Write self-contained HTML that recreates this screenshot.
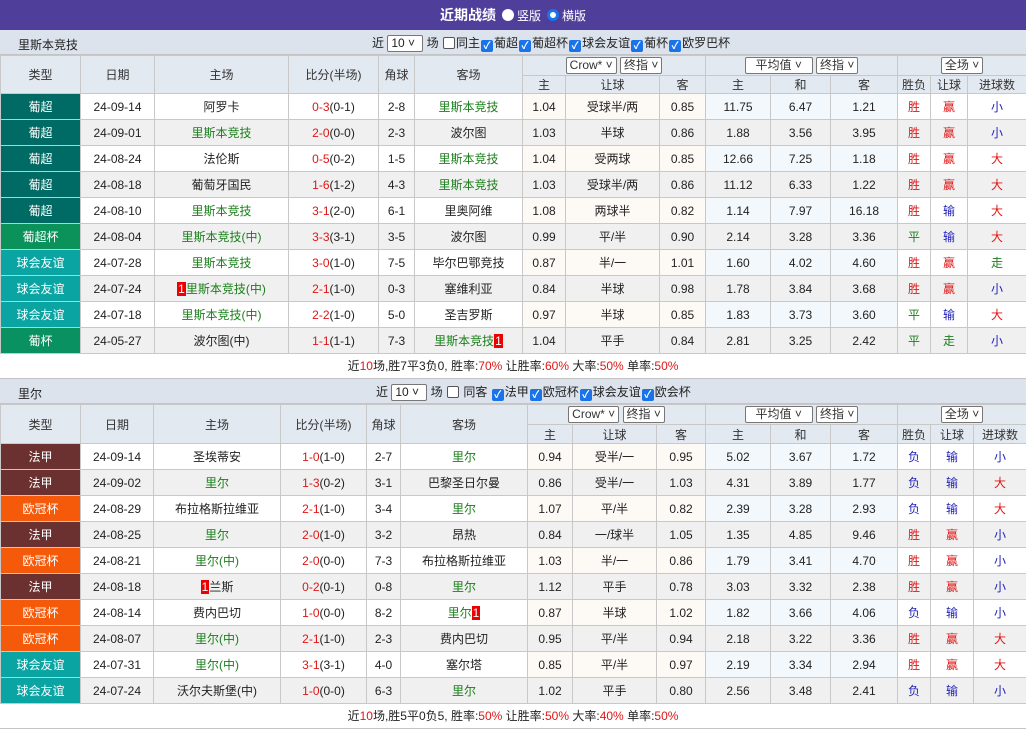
<!DOCTYPE html>
<html><head><meta charset="utf-8">
<style>
*{margin:0;padding:0;box-sizing:border-box}
body{width:1026px;height:731px;overflow:hidden;background:#fff;font-family:"Liberation Sans","Noto Sans CJK SC",sans-serif;font-size:12px;color:#222}
.title{height:30px;background:#4f3f9b;color:#fff;text-align:center;line-height:30px;font-size:14px;font-weight:bold}
.title .rd{display:inline-block;width:12px;height:12px;border-radius:50%;background:#fff;vertical-align:-1px;margin:0 3px 0 6px}
.title .rd.on{border:3px solid #1a73e8}
.title small{font-size:12px;font-weight:normal}
.sec{height:25px;background:#dce3ec;position:relative;border-bottom:1px solid #c4c4c4}
.sec .nm{position:absolute;left:18px;top:6px;font-size:12px}
.sec .flt{position:absolute;top:4px;font-size:12px;white-space:nowrap}
.sel{display:inline-block;border:1px solid #777;background:#fff;height:17px;line-height:15px;padding:0 3px;border-radius:2px;font-size:12px;vertical-align:middle}
.cb{display:inline-block;width:12px;height:12px;border:1px solid #555;border-radius:2px;background:#fff;vertical-align:-2px;margin:0 1px}
.cb.on{background:#1a73e8;border-color:#1a73e8;color:#fff;font-size:10px;line-height:11px;text-align:center;font-weight:bold}
table{border-collapse:collapse;table-layout:fixed;width:1026px}
td{border:1px solid #c8c8c8;text-align:center;white-space:nowrap;overflow:hidden;padding:0}
tr.h td{background:#e3e9f0;color:#333}
tr.d td{height:26px}
tr.d.e td{background:#f0f0f0}
tr.d.o td.c{background:#fdf9f5}
tr.d.o td.a{background:#f2f8fc}
tr.d td.t{color:#fff}
tr.d td.pc{background:#006b64}tr.d td.pcb{background:#0b925b}tr.d td.yy{background:#0aa5a3}tr.d td.pb{background:#0a9162}tr.d td.fj{background:#6b3131}tr.d td.og{background:#f55a0a}
.g{color:#1a7f1a}.r{color:#e01616}.b{color:#2222bb}
.n1{background:#e00;color:#fff;padding:0 1px}
.sum{height:25px;text-align:center;line-height:25px;border-bottom:1px solid #c4c4c4}
</style></head><body>
<div class="title">近期战绩<span class="rd"></span><small>竖版</small><span class="rd on"></span><small>横版</small></div>

<div class="sec"><span class="nm">里斯本竞技</span><span class="flt" style="left:372px">近 <span class="sel" style="width:36px">10 ˅</span> 场 <span class="cb"></span>同主<span class="cb on">✓</span>葡超<span class="cb on">✓</span>葡超杯<span class="cb on">✓</span>球会友谊<span class="cb on">✓</span>葡杯<span class="cb on">✓</span>欧罗巴杯</span></div>
<table>
<colgroup><col style="width:80px"><col style="width:74px"><col style="width:134px"><col style="width:90px"><col style="width:36px"><col style="width:108px"><col style="width:43px"><col style="width:94px"><col style="width:46px"><col style="width:65px"><col style="width:60px"><col style="width:67px"><col style="width:33px"><col style="width:37px"><col style="width:59px"></colgroup>
<tr class="h" style="height:20px"><td rowspan="2">类型</td><td rowspan="2">日期</td><td rowspan="2">主场</td><td rowspan="2">比分(半场)</td><td rowspan="2">角球</td><td rowspan="2">客场</td><td colspan="3"><span class="sel">Crow* ˅</span> <span class="sel">终指 ˅</span></td><td colspan="3"><span class="sel" style="width:68px">平均值 ˅</span> <span class="sel">终指 ˅</span></td><td colspan="3"><span class="sel">全场 ˅</span></td></tr>
<tr class="h" style="height:18px"><td>主</td><td>让球</td><td>客</td><td>主</td><td>和</td><td>客</td><td>胜负</td><td>让球</td><td>进球数</td></tr>
<tr class="d o"><td class="t pc">葡超</td><td>24-09-14</td><td>阿罗卡</td><td><span class="r">0-3</span>(0-1)</td><td>2-8</td><td class="g">里斯本竞技</td><td class="c">1.04</td><td class="c">受球半/两</td><td class="c">0.85</td><td class="a">11.75</td><td class="a">6.47</td><td class="a">1.21</td><td class="r">胜</td><td class="r">赢</td><td class="b">小</td></tr>
<tr class="d e"><td class="t pc">葡超</td><td>24-09-01</td><td class="g">里斯本竞技</td><td><span class="r">2-0</span>(0-0)</td><td>2-3</td><td>波尔图</td><td>1.03</td><td>半球</td><td>0.86</td><td>1.88</td><td>3.56</td><td>3.95</td><td class="r">胜</td><td class="r">赢</td><td class="b">小</td></tr>
<tr class="d o"><td class="t pc">葡超</td><td>24-08-24</td><td>法伦斯</td><td><span class="r">0-5</span>(0-2)</td><td>1-5</td><td class="g">里斯本竞技</td><td class="c">1.04</td><td class="c">受两球</td><td class="c">0.85</td><td class="a">12.66</td><td class="a">7.25</td><td class="a">1.18</td><td class="r">胜</td><td class="r">赢</td><td class="r">大</td></tr>
<tr class="d e"><td class="t pc">葡超</td><td>24-08-18</td><td>葡萄牙国民</td><td><span class="r">1-6</span>(1-2)</td><td>4-3</td><td class="g">里斯本竞技</td><td>1.03</td><td>受球半/两</td><td>0.86</td><td>11.12</td><td>6.33</td><td>1.22</td><td class="r">胜</td><td class="r">赢</td><td class="r">大</td></tr>
<tr class="d o"><td class="t pc">葡超</td><td>24-08-10</td><td class="g">里斯本竞技</td><td><span class="r">3-1</span>(2-0)</td><td>6-1</td><td>里奥阿维</td><td class="c">1.08</td><td class="c">两球半</td><td class="c">0.82</td><td class="a">1.14</td><td class="a">7.97</td><td class="a">16.18</td><td class="r">胜</td><td class="b">输</td><td class="r">大</td></tr>
<tr class="d e"><td class="t pcb">葡超杯</td><td>24-08-04</td><td class="g">里斯本竞技(中)</td><td><span class="r">3-3</span>(3-1)</td><td>3-5</td><td>波尔图</td><td>0.99</td><td>平/半</td><td>0.90</td><td>2.14</td><td>3.28</td><td>3.36</td><td class="g">平</td><td class="b">输</td><td class="r">大</td></tr>
<tr class="d o"><td class="t yy">球会友谊</td><td>24-07-28</td><td class="g">里斯本竞技</td><td><span class="r">3-0</span>(1-0)</td><td>7-5</td><td>毕尔巴鄂竞技</td><td class="c">0.87</td><td class="c">半/一</td><td class="c">1.01</td><td class="a">1.60</td><td class="a">4.02</td><td class="a">4.60</td><td class="r">胜</td><td class="r">赢</td><td class="g">走</td></tr>
<tr class="d e"><td class="t yy">球会友谊</td><td>24-07-24</td><td class="g"><span class="n1">1</span>里斯本竞技(中)</td><td><span class="r">2-1</span>(1-0)</td><td>0-3</td><td>塞维利亚</td><td>0.84</td><td>半球</td><td>0.98</td><td>1.78</td><td>3.84</td><td>3.68</td><td class="r">胜</td><td class="r">赢</td><td class="b">小</td></tr>
<tr class="d o"><td class="t yy">球会友谊</td><td>24-07-18</td><td class="g">里斯本竞技(中)</td><td><span class="r">2-2</span>(1-0)</td><td>5-0</td><td>圣吉罗斯</td><td class="c">0.97</td><td class="c">半球</td><td class="c">0.85</td><td class="a">1.83</td><td class="a">3.73</td><td class="a">3.60</td><td class="g">平</td><td class="b">输</td><td class="r">大</td></tr>
<tr class="d e"><td class="t pb">葡杯</td><td>24-05-27</td><td>波尔图(中)</td><td><span class="r">1-1</span>(1-1)</td><td>7-3</td><td class="g">里斯本竞技<span class="n1">1</span></td><td>1.04</td><td>平手</td><td>0.84</td><td>2.81</td><td>3.25</td><td>2.42</td><td class="g">平</td><td class="g">走</td><td class="b">小</td></tr>
</table>
<div class="sum">近<span class="r">10</span>场,胜7平3负0, 胜率:<span class="r">70%</span> 让胜率:<span class="r">60%</span> 大率:<span class="r">50%</span> 单率:<span class="r">50%</span></div>

<div class="sec" style="border-top:0"><span class="nm">里尔</span><span class="flt" style="left:376px">近 <span class="sel" style="width:36px">10 ˅</span> 场 <span class="cb"></span> 同客 <span class="cb on">✓</span>法甲<span class="cb on">✓</span>欧冠杯<span class="cb on">✓</span>球会友谊<span class="cb on">✓</span>欧会杯</span></div>
<table>
<colgroup><col style="width:80px"><col style="width:73px"><col style="width:127px"><col style="width:86px"><col style="width:34px"><col style="width:127px"><col style="width:45px"><col style="width:84px"><col style="width:49px"><col style="width:65px"><col style="width:60px"><col style="width:67px"><col style="width:33px"><col style="width:43px"><col style="width:53px"></colgroup>
<tr class="h" style="height:20px"><td rowspan="2">类型</td><td rowspan="2">日期</td><td rowspan="2">主场</td><td rowspan="2">比分(半场)</td><td rowspan="2">角球</td><td rowspan="2">客场</td><td colspan="3"><span class="sel">Crow* ˅</span> <span class="sel">终指 ˅</span></td><td colspan="3"><span class="sel" style="width:68px">平均值 ˅</span> <span class="sel">终指 ˅</span></td><td colspan="3"><span class="sel">全场 ˅</span></td></tr>
<tr class="h" style="height:19px"><td>主</td><td>让球</td><td>客</td><td>主</td><td>和</td><td>客</td><td>胜负</td><td>让球</td><td>进球数</td></tr>
<tr class="d o"><td class="t fj">法甲</td><td>24-09-14</td><td>圣埃蒂安</td><td><span class="r">1-0</span>(1-0)</td><td>2-7</td><td class="g">里尔</td><td class="c">0.94</td><td class="c">受半/一</td><td class="c">0.95</td><td class="a">5.02</td><td class="a">3.67</td><td class="a">1.72</td><td class="b">负</td><td class="b">输</td><td class="b">小</td></tr>
<tr class="d e"><td class="t fj">法甲</td><td>24-09-02</td><td class="g">里尔</td><td><span class="r">1-3</span>(0-2)</td><td>3-1</td><td>巴黎圣日尔曼</td><td>0.86</td><td>受半/一</td><td>1.03</td><td>4.31</td><td>3.89</td><td>1.77</td><td class="b">负</td><td class="b">输</td><td class="r">大</td></tr>
<tr class="d o"><td class="t og">欧冠杯</td><td>24-08-29</td><td>布拉格斯拉维亚</td><td><span class="r">2-1</span>(1-0)</td><td>3-4</td><td class="g">里尔</td><td class="c">1.07</td><td class="c">平/半</td><td class="c">0.82</td><td class="a">2.39</td><td class="a">3.28</td><td class="a">2.93</td><td class="b">负</td><td class="b">输</td><td class="r">大</td></tr>
<tr class="d e"><td class="t fj">法甲</td><td>24-08-25</td><td class="g">里尔</td><td><span class="r">2-0</span>(1-0)</td><td>3-2</td><td>昂热</td><td>0.84</td><td>一/球半</td><td>1.05</td><td>1.35</td><td>4.85</td><td>9.46</td><td class="r">胜</td><td class="r">赢</td><td class="b">小</td></tr>
<tr class="d o"><td class="t og">欧冠杯</td><td>24-08-21</td><td class="g">里尔(中)</td><td><span class="r">2-0</span>(0-0)</td><td>7-3</td><td>布拉格斯拉维亚</td><td class="c">1.03</td><td class="c">半/一</td><td class="c">0.86</td><td class="a">1.79</td><td class="a">3.41</td><td class="a">4.70</td><td class="r">胜</td><td class="r">赢</td><td class="b">小</td></tr>
<tr class="d e"><td class="t fj">法甲</td><td>24-08-18</td><td><span class="n1">1</span>兰斯</td><td><span class="r">0-2</span>(0-1)</td><td>0-8</td><td class="g">里尔</td><td>1.12</td><td>平手</td><td>0.78</td><td>3.03</td><td>3.32</td><td>2.38</td><td class="r">胜</td><td class="r">赢</td><td class="b">小</td></tr>
<tr class="d o"><td class="t og">欧冠杯</td><td>24-08-14</td><td>费内巴切</td><td><span class="r">1-0</span>(0-0)</td><td>8-2</td><td class="g">里尔<span class="n1">1</span></td><td class="c">0.87</td><td class="c">半球</td><td class="c">1.02</td><td class="a">1.82</td><td class="a">3.66</td><td class="a">4.06</td><td class="b">负</td><td class="b">输</td><td class="b">小</td></tr>
<tr class="d e"><td class="t og">欧冠杯</td><td>24-08-07</td><td class="g">里尔(中)</td><td><span class="r">2-1</span>(1-0)</td><td>2-3</td><td>费内巴切</td><td>0.95</td><td>平/半</td><td>0.94</td><td>2.18</td><td>3.22</td><td>3.36</td><td class="r">胜</td><td class="r">赢</td><td class="r">大</td></tr>
<tr class="d o"><td class="t yy">球会友谊</td><td>24-07-31</td><td class="g">里尔(中)</td><td><span class="r">3-1</span>(3-1)</td><td>4-0</td><td>塞尔塔</td><td class="c">0.85</td><td class="c">平/半</td><td class="c">0.97</td><td class="a">2.19</td><td class="a">3.34</td><td class="a">2.94</td><td class="r">胜</td><td class="r">赢</td><td class="r">大</td></tr>
<tr class="d e"><td class="t yy">球会友谊</td><td>24-07-24</td><td>沃尔夫斯堡(中)</td><td><span class="r">1-0</span>(0-0)</td><td>6-3</td><td class="g">里尔</td><td>1.02</td><td>平手</td><td>0.80</td><td>2.56</td><td>3.48</td><td>2.41</td><td class="b">负</td><td class="b">输</td><td class="b">小</td></tr>
</table>
<div class="sum">近<span class="r">10</span>场,胜5平0负5, 胜率:<span class="r">50%</span> 让胜率:<span class="r">50%</span> 大率:<span class="r">40%</span> 单率:<span class="r">50%</span></div>
</body></html>
